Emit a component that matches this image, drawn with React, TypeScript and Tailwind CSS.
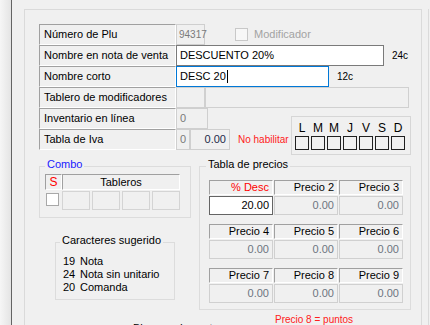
import React from "react";

const days = ["L", "M", "M", "J", "V", "S", "D"];

function Label({ children }: { children: React.ReactNode }) {
	return (
		<div className="w-[137px] h-full flex items-center pl-[4px] border border-[#a0a0a0] border-b-white border-r-white shrink-0 whitespace-nowrap">
			{children}
		</div>
	);
}

function PriceBlock({ heads, values }: { heads: string[]; values: string[] }) {
	return (
		<div className="flex flex-col gap-[1px]">
			<div className="flex gap-[1px]">
				{heads.map((h, i) => (
					<div
						key={h}
						className={`w-[64px] h-[15px] flex items-center justify-end pr-[3px] border border-[#a0a0a0] border-b-white border-r-white ${
							i === 0 && h === "% Desc" ? "text-[#ff0000]" : "text-black"
						}`}
					>
						{h}
					</div>
				))}
			</div>
			<div className="flex gap-[1px]">
				{values.map((v, i) =>
					v === "20.00" ? (
						<div key={i} className="w-[64px] h-[19px] flex items-center justify-end pr-[3px] bg-white border border-[#646464] text-black">
							{v}
						</div>
					) : (
						<div key={i} className="w-[64px] h-[19px] flex items-center justify-end pr-[3px] border border-[#d0d0d0] text-[#6d7580]">
							{v}
						</div>
					)
				)}
			</div>
		</div>
	);
}

export default function App() {
	return (
		<div className="flex w-[430px] h-[325px] overflow-hidden bg-[#f0f0f0] text-[11px] leading-none text-black font-['Liberation_Sans',Arial,sans-serif]">
			{/* window edge */}
			<div className="w-[11px] h-full bg-gradient-to-r from-[#f6f6f6] to-[#e4e4e4] shrink-0" />
			<div className="w-px h-full bg-[#646464] shrink-0" />

			<div className="flex pt-[9px] pl-[12px]">
				<div className="w-[398px] h-[330px] border-t border-l border-r border-[#dadada] pt-[14px] pl-[14px]">
					{/* Row 1 */}
					<div className="flex items-stretch h-[21px]">
						<Label>Número de Plu</Label>
						<div className="w-[29px] flex items-center pl-[2px] border border-[#cfcfcf] text-[10px] text-[#7a7a7a]">94317</div>
						<div className="flex items-center ml-[30px]">
							<div className="w-[13px] h-[13px] border border-[#c8c8c8] bg-[#f7f7f7]" />
							<span className="ml-[6px] text-[#a3a3a3]">Modificador</span>
						</div>
					</div>
					{/* Row 2 */}
					<div className="flex items-stretch h-[21px]">
						<Label>Nombre en nota de venta</Label>
						<div className="w-[208px] flex items-center pl-[3px] bg-white border border-[#7a7a7a]">DESCUENTO 20%</div>
						<span className="ml-[8px] self-center text-[10px]">24c</span>
					</div>
					{/* Row 3 */}
					<div className="flex items-stretch h-[21px]">
						<Label>Nombre corto</Label>
						<div className="w-[153px] flex items-center pl-[3px] bg-white border border-[#0078d7]">
							DESC 20<span className="w-px h-[13px] bg-black ml-px" />
						</div>
						<span className="ml-[8px] self-center text-[10px]">12c</span>
					</div>
					{/* Row 4 */}
					<div className="flex items-stretch h-[21px]">
						<Label>Tablero de modificadores</Label>
						<div className="w-[29px] border border-[#d0d0d0]" />
						<div className="w-[204px] border border-[#d0d0d0]" />
					</div>
					{/* Rows 5-6 with days */}
					<div className="flex">
						<div className="w-[252px] flex flex-col">
							<div className="flex items-stretch h-[21px]">
								<Label>Inventario en línea</Label>
								<div className="w-[32px] flex items-center pl-[3px] border border-[#cfcfcf] text-[#7a7a7a]">0</div>
							</div>
							<div className="flex items-stretch h-[21px]">
								<Label>Tabla de Iva</Label>
								<div className="w-[14px] flex items-center justify-center border border-[#cfcfcf] text-[#7a7a7a]">0</div>
								<div className="w-[40px] flex items-center justify-end pr-[3px] border border-[#cfcfcf] text-[#1e2a4a]">0.00</div>
								<span className="ml-[8px] self-center text-[10px] text-[#ff2020] whitespace-nowrap">No habilitar</span>
							</div>
						</div>
						<div className="w-[120px] h-[39px] mt-[8px] border border-[#d6d6d6] pt-[5px] pl-[3px]">
							<div className="flex gap-[2px]">
								{days.map((d, i) => (
									<div key={i} className="w-[14px] flex flex-col items-center">
										<span className="h-[14px] text-[12px] leading-[12px]">{d}</span>
										<div className="w-[14px] h-[14px] border border-[#202020]" />
									</div>
								))}
							</div>
						</div>
					</div>

					{/* Bottom section */}
					<div className="flex mt-[4px]">
						<div className="w-[152px] flex flex-col">
							<fieldset className="h-[59px] border border-[#dcdcdc]">
								<legend className="ml-[5px] px-[2px] h-[14px] text-[#1a1aff]">Combo</legend>
								<div className="pl-[5px]">
									<div className="flex mt-[1px]">
										<div className="w-[17px] h-[16px] flex items-center justify-center border border-[#a0a0a0] border-b-white border-r-white text-[12px] text-[#ff0000]">S</div>
										<div className="w-[118px] h-[16px] flex items-center justify-center border border-[#a0a0a0] border-b-white border-r-white">Tableros</div>
									</div>
									<div className="flex mt-[1px]">
										<div className="w-[17px] pl-[1px] pt-[2px]">
											<div className="w-[13px] h-[13px] bg-white border border-[#a8a8a8]" />
										</div>
										<div className="flex gap-[2px]">
											{[0, 1, 2, 3].map((i) => (
												<div key={i} className="w-[28px] h-[19px] border border-[#d4d4d4]" />
											))}
										</div>
									</div>
								</div>
							</fieldset>

							<fieldset className="w-[120px] h-[65px] ml-[16px] mt-[17px] border border-[#dcdcdc]">
								<legend className="ml-[4px] px-[2px] h-[14px] whitespace-nowrap">Caracteres sugerido</legend>
								<div className="pl-[7px] mt-[6px] leading-[13px] whitespace-nowrap">
									<div className="flex"><span className="w-[17px]">19</span>Nota</div>
									<div className="flex"><span className="w-[17px]">24</span>Nota sin unitario</div>
									<div className="flex"><span className="w-[17px]">20</span>Comanda</div>
								</div>
							</fieldset>

							<div className="ml-[94px] mt-[23px] whitespace-nowrap">Bloqueo de venta</div>
						</div>

						<div className="flex flex-col ml-[8px]">
							<fieldset className="w-[212px] h-[151px] border border-[#dcdcdc]">
								<legend className="ml-[6px] px-[2px] h-[14px]">Tabla de precios</legend>
								<div className="pl-[9px] mt-[7px] flex flex-col gap-[9px]">
									<PriceBlock heads={["% Desc", "Precio 2", "Precio 3"]} values={["20.00", "0.00", "0.00"]} />
									<PriceBlock heads={["Precio 4", "Precio 5", "Precio 6"]} values={["0.00", "0.00", "0.00"]} />
									<PriceBlock heads={["Precio 7", "Precio 8", "Precio 9"]} values={["0.00", "0.00", "0.00"]} />
								</div>
							</fieldset>
							<div className="ml-[76px] mt-[5px] text-[10px] text-[#ff2020]">Precio 8 = puntos</div>
						</div>
					</div>
				</div>
				<div className="w-px h-[330px] ml-[6px] bg-[#dadada]" />
			</div>
		</div>
	);
}
